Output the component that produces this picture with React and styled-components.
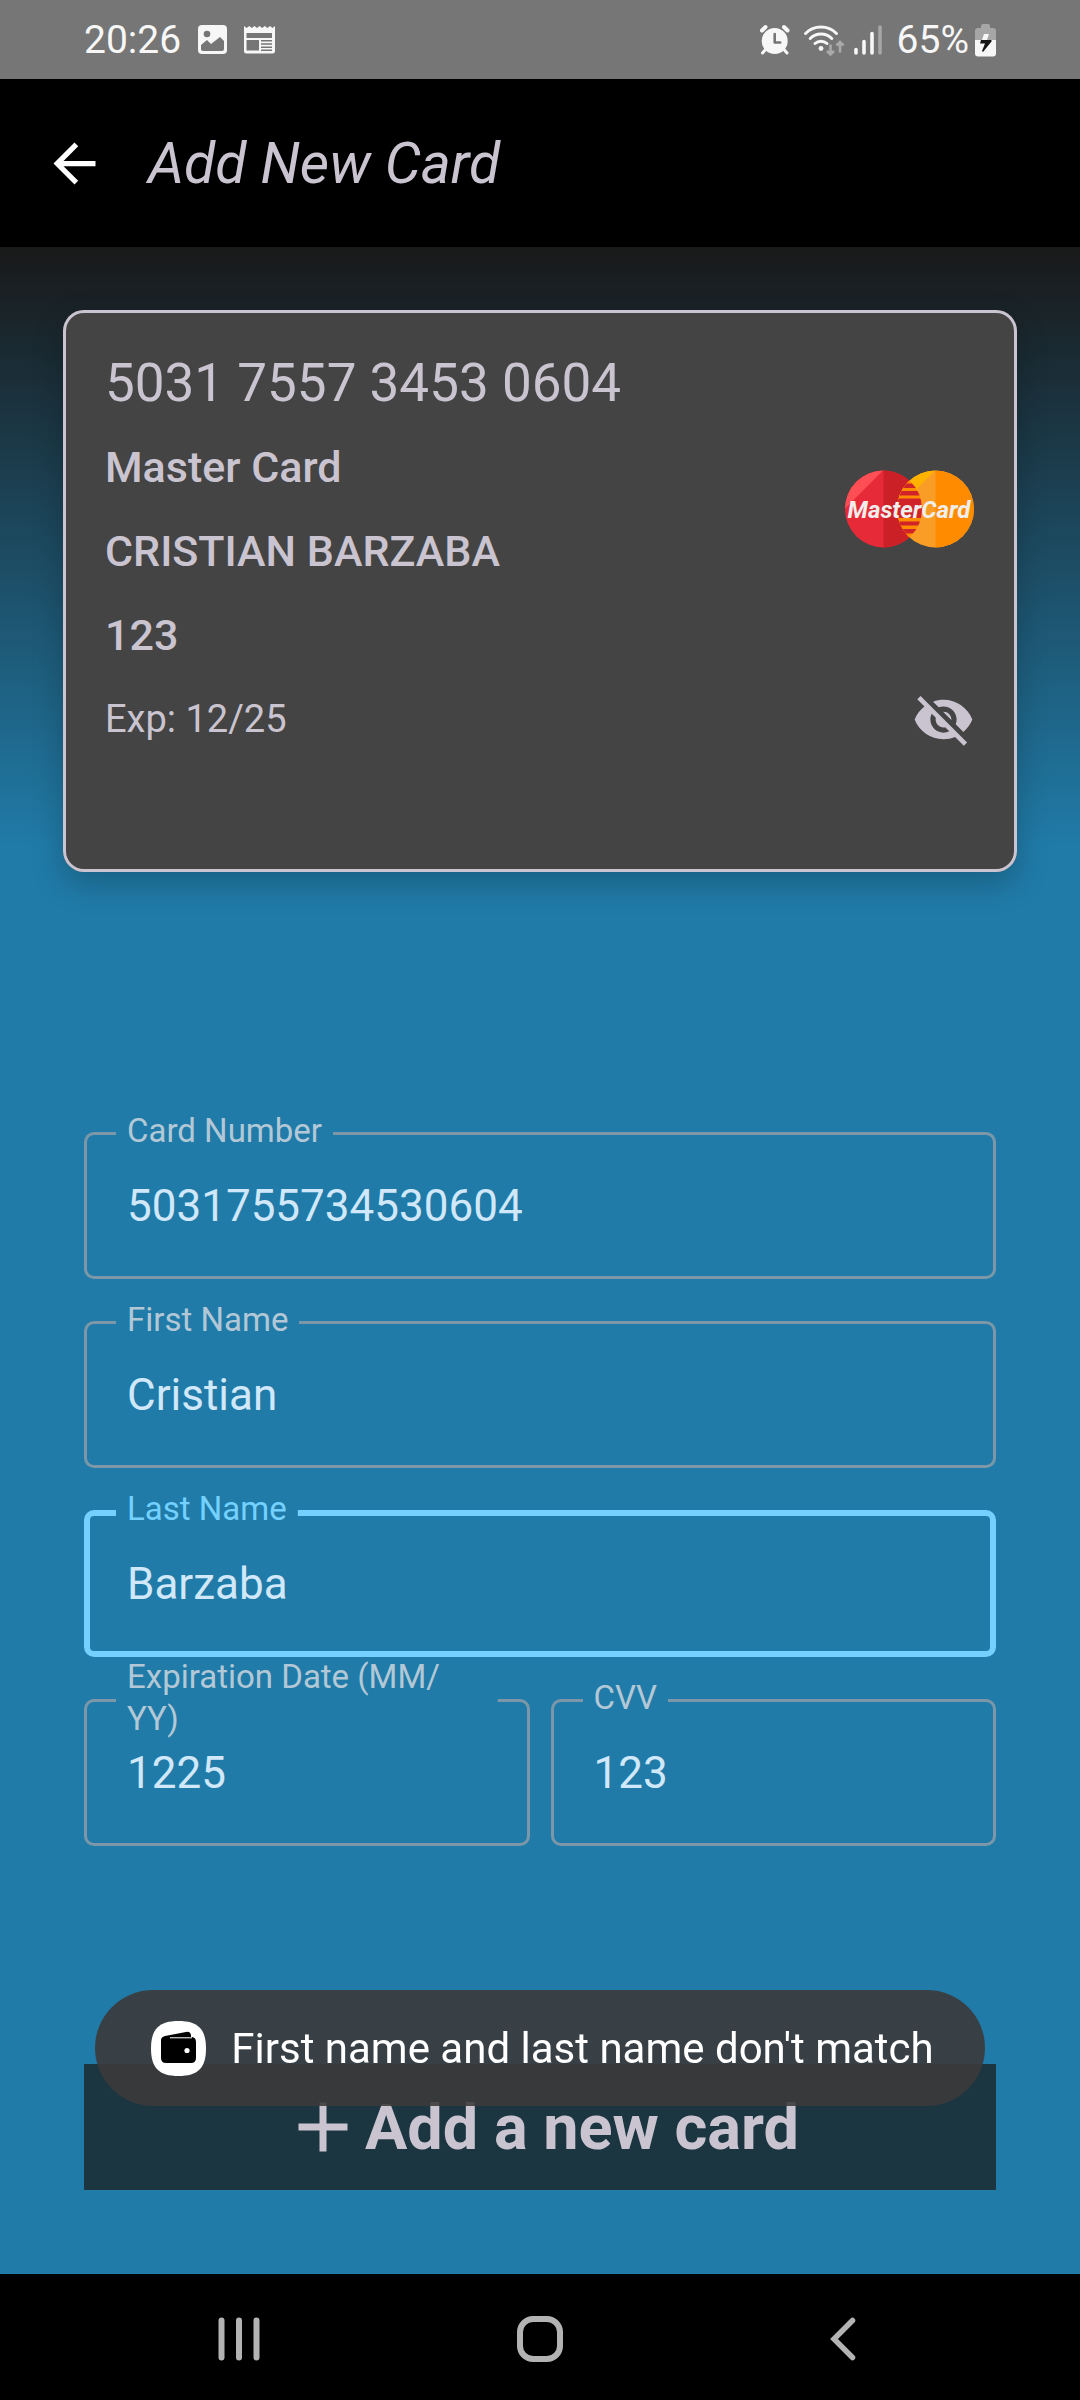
import React from "react";
import styled, { createGlobalStyle, css } from "styled-components";

const color = {
  water: "#207ba8",
  ink: "#191919",
  lilac: "#cac4d0",
  card: "#444444",
  outline: "#7c98a8",
  label: "#b3c8d6",
  value: "#d0e8f9",
  focus: "#74d1ff",
};

const GlobalStyle = createGlobalStyle`
  *, *::before, *::after { box-sizing: border-box; }
  body {
    margin: 0;
    background: ${color.water};
    font-family: Roboto, "Noto Sans", sans-serif;
  }
  button, input { font: inherit; }
`;

const Screen = styled.div`
  display: flex;
  flex-direction: column;
  min-height: 100vh;
`;

const StatusBar = styled.header`
  display: flex;
  align-items: center;
  justify-content: space-between;
  height: 79px;
  padding: 0 84px;
  background: #767676;
  color: #f7f7f7;
  font-size: 39px;
`;

const StatusGroup = styled.div`
  display: flex;
  align-items: center;
  gap: ${(p) => p.$gap}px;

  svg { display: block; }
`;

const AppBar = styled.div`
  display: flex;
  align-items: center;
  gap: 42px;
  height: 168px;
  padding: 0 43px;
  background: #000;
`;

const IconButton = styled.button`
  display: grid;
  place-items: center;
  padding: 0;
  border: 0;
  background: none;
  color: ${(p) => p.$tint};
  cursor: pointer;

  svg { display: block; }
`;

const Title = styled.h1`
  margin: 0;
  color: ${color.lilac};
  font-size: 57px;
  font-style: italic;
  font-weight: 400;
`;

const Content = styled.main`
  display: flex;
  flex: 1;
  flex-direction: column;
  padding: 63px 63px 84px;
  background: linear-gradient(${color.ink}, ${color.water} 600px);
`;

const BankCard = styled.section`
  display: grid;
  grid-template-columns: 1fr auto;
  grid-template-rows: repeat(5, 84px);
  align-items: center;
  padding: 31px 42px 111px;
  border-radius: 21px;
  background: ${color.card};
  box-shadow: inset 0 0 0 3px ${color.lilac}, 0 12px 32px rgba(0, 0, 0, 0.22);
  color: ${color.lilac};
`;

const cardText = {
  number: css`font-size: 53px;`,
  strong: css`font-size: 43px; font-weight: 500;`,
  small: css`font-size: 38px;`,
};

const CardLine = styled.p`
  grid-column: 1;
  margin: 0;
  ${(p) => cardText[p.$kind]}
`;

const Brand = styled.div`
  grid-column: 2;
  grid-row: 2 / span 2;
  justify-self: end;

  svg { display: block; }
`;

const Reveal = styled(IconButton)`
  grid-column: 2;
  grid-row: 5;
  justify-self: end;
`;

const Form = styled.form`
  display: flex;
  flex: 1;
  flex-direction: column;
  justify-content: space-between;
  padding: 260px 21px 0;
`;

const Fields = styled.div`
  display: grid;
  grid-template-columns: 1fr 1fr;
  gap: 42px 21px;
`;

const Field = styled.div`
  position: relative;
  grid-column: ${(p) => (p.$half ? "auto" : "1 / -1")};
`;

const FieldLabel = styled.label`
  position: absolute;
  top: -1px;
  left: 32px;
  max-width: calc(100% - 64px);
  padding: 0 11px;
  transform: translateY(-50%);
  background: linear-gradient(${color.water}, ${color.water}) center / 100% 16px no-repeat;
  color: ${(p) => (p.$active ? color.focus : color.label)};
  font-size: 33px;
  line-height: 42px;
`;

const FieldInput = styled.input`
  display: block;
  width: 100%;
  height: 147px;
  padding: 0 43px;
  border: 0;
  border-radius: 10px;
  outline: 0;
  background: transparent;
  box-shadow: inset 0 0 0 ${(p) => (p.$active ? `6px ${color.focus}` : `3px ${color.outline}`)};
  color: ${color.value};
  font-size: 44px;
`;

const SubmitButton = styled.button`
  display: flex;
  align-items: center;
  justify-content: center;
  height: 126px;
  padding: 0;
  border: 0;
  background: #1b3641;
  color: ${color.lilac};
  font-size: 63px;
  font-weight: 700;
  cursor: pointer;
`;

const ToastLayer = styled.div`
  position: fixed;
  right: 0;
  bottom: 294px;
  left: 0;
  display: flex;
  justify-content: center;
  pointer-events: none;
`;

const Toast = styled.div`
  display: flex;
  align-items: center;
  gap: 25px;
  height: 116px;
  padding: 0 51px 0 56px;
  border-radius: 58px;
  background: rgba(59, 57, 57, 0.89);
  color: #fff;
  font-size: 42px;
`;

const NavBar = styled.nav`
  display: grid;
  grid-template-columns: repeat(3, 1fr);
  height: 126px;
  padding: 4px 87px 0 88px;
  background: #000;
`;

function PictureIcon() {
  return (
    <svg width="29" height="29" viewBox="0 0 29 29" aria-hidden="true">
      <rect width="29" height="29" rx="4" fill="#f7f7f7" />
      <circle cx="9" cy="9" r="3.3" fill="#767676" />
      <path d="M3 20l6-5 4 4 9-7 4 4v8q0 2-2 2H5q-2 0-2-2z" fill="#767676" />
    </svg>
  );
}

function NewsIcon() {
  return (
    <svg width="31" height="29" viewBox="0 0 31 29" aria-hidden="true">
      <path
        d="M0 1l2.6 2L5.2 1l2.6 2 2.6-2L13 3l2.6-2 2.6 2 2.6-2 2.6 2L26 1l2.6 2L31 1v25q0 2.500-2.500 2.500h-26Q0 28.500 0 26z"
        fill="#f7f7f7"
      />
      <path
        d="M2.500 8h25.500v5H2.500zM2.500 15h12.500v10.500H2.500zM17 15h11v1.500H17zM17 18.200h11v1.500H17zM17 21.400h11v1.500H17zM17 24.500h11v1.500H17z"
        fill="#767676"
      />
    </svg>
  );
}

function AlarmIcon() {
  return (
    <svg width="38" height="32" viewBox="0 0 38 32" aria-hidden="true">
      <g stroke="#f7f7f7" strokeLinecap="round">
        <path d="M3 6.500L6.500 3M28.500 6.500L25 3" strokeWidth="4" />
        <path d="M7 25l-3.500 4M24.500 25l3.500 4" strokeWidth="3" />
      </g>
      <circle cx="15.700" cy="17" r="13" fill="#f7f7f7" />
      <path d="M15.700 10v8.500h5.500" fill="none" stroke="#767676" strokeWidth="2.600" strokeLinecap="round" strokeLinejoin="round" />
    </svg>
  );
}

function WifiIcon() {
  return (
    <svg width="45" height="34" viewBox="0 0 45 34" fill="none" aria-hidden="true">
      <g stroke="#f7f7f7" strokeWidth="3" strokeLinecap="round">
        <path d="M2.500 10.500a22 22 0 0 1 31 0" />
        <path d="M7.200 15.500a15.500 15.500 0 0 1 21.600 0" />
        <path d="M12 20.500a9 9 0 0 1 12 0" />
      </g>
      <circle cx="18" cy="25.500" r="2.400" fill="#f7f7f7" />
      <path
        d="M27.500 21.500v9.500M24 28l3.500 3.500L31 28M37 29.500V19.500M33.500 22.500L37 19l3.500 3.500"
        stroke="#aaa"
        strokeWidth="2.600"
      />
    </svg>
  );
}

function SignalIcon() {
  return (
    <svg width="37" height="32" viewBox="0 0 37 32" strokeLinecap="round" strokeWidth="3.600" aria-hidden="true">
      <path d="M2 25.500v3.500M10 17.500V29M18 9.500V29" stroke="#f7f7f7" />
      <path d="M26 3v26" stroke="#a6a6a6" />
    </svg>
  );
}

function BatteryIcon() {
  return (
    <svg width="21" height="34" viewBox="0 0 21 34" aria-hidden="true">
      <path d="M6 5V3q0-2 2-2h5q2 0 2 2v2h3q3 0 3 3v9H0V8q0-3 3-3z" fill="#a6a6a6" />
      <path d="M0 17h21v13.500q0 3-3 3H3q-3 0-3-3z" fill="#f7f7f7" />
      <path d="M9 11h5l-2 6H7z" fill="#f7f7f7" />
      <path d="M6 17h10.500v1.500L8 29l-1-1 3-7.500H5z" fill="#141414" />
    </svg>
  );
}

function MaterialIcon({ size, path }) {
  return (
    <svg width={size} height={size} viewBox="0 0 24 24" fill="currentColor" aria-hidden="true">
      <path d={path} />
    </svg>
  );
}

const ARROW_BACK = "M20 11H7.830l5.590-5.590L12 4l-8 8 8 8 1.410-1.410L7.830 13H20v-2z";
const ADD = "M19 13h-6v6h-2v-6H5v-2h6V5h2v6h6v2z";
const VISIBILITY_OFF =
  "M12 7c2.760 0 5 2.240 5 5 0 .65-.13 1.260-.36 1.830l2.920 2.920c1.510-1.260 2.700-2.890 3.430-4.750-1.730-4.390-6-7.500-11-7.500-1.400 0-2.740.25-3.980.7l2.160 2.160C10.740 7.130 11.350 7 12 7zM2 4.270l2.280 2.280.46.46C3.080 8.300 1.780 10.020 1 12c1.730 4.390 6 7.500 11 7.500 1.550 0 3.030-.3 4.380-.84l.42.42L19.730 22 21 20.730 3.270 3 2 4.270zM7.530 9.800l1.550 1.550c-.05.21-.08.43-.08.65 0 1.660 1.340 3 3 3 .22 0 .44-.03.65-.08l1.550 1.550c-.67.33-1.410.53-2.200.53-2.760 0-5-2.240-5-5 0-.79.2-1.530.53-2.200zm4.310-.78l3.150 3.150.02-.16c0-1.660-1.340-3-3-3l-.17.01z";

const STRIPES = [
  [13.5, 4.5],
  [21, 4.5],
  [28.500, 19.500],
  [51.500, 4],
  [59, 4.500],
];

function MasterCardLogo() {
  return (
    <svg width="130" height="78" viewBox="0 0 130 78" role="img" aria-label="MasterCard">
      <defs>
        <clipPath id="mc-left"><circle cx="38.500" cy="39" r="38.500" /></clipPath>
        <clipPath id="mc-right"><circle cx="90.500" cy="39" r="38.500" /></clipPath>
      </defs>
      <g clipPath="url(#mc-left)">
        <path d="M0 0h78v78H0z" fill="#e62a37" />
        <path d="M0 0h38.500L0 38.500z" fill="#ff4f55" />
        <path d="M38.500 0H78v78H38.500z" fill="#cc2027" />
      </g>
      <g clipPath="url(#mc-right)">
        <path d="M52 0h78v78H52z" fill="#f99d26" />
        <path d="M52 0h38.500L52 38.500z" fill="#ffb300" />
        <path d="M90.500 0H130v78H90.500z" fill="#ff8c00" />
        <g clipPath="url(#mc-left)">
          <path d="M52 0h26v78H52z" fill="#ff8c00" />
          {STRIPES.map(([y, h]) => (
            <rect key={y} x="50" y={y} width="30" height={h} fill="#d1232a" />
          ))}
        </g>
      </g>
      <text
        x="64"
        y="48"
        textAnchor="middle"
        fill="#f0eeec"
        fontFamily='Roboto, "Noto Sans", sans-serif'
        fontSize="24"
        fontStyle="italic"
        fontWeight="700"
      >
        MasterCard
      </text>
    </svg>
  );
}

function WalletIcon() {
  return (
    <svg width="55" height="55" viewBox="0 0 55 55" aria-hidden="true">
      <path
        d="M27.500 0C47 0 55 8 55 27.500S47 55 27.500 55 0 47 0 27.500 8 0 27.500 0z"
        fill="#fff"
      />
      <path d="M10 19q0-3 4-4l21-4q4-1 5 3v2q5 0 5 5v16q0 5-5 5H15q-5 0-5-5z" fill="#000" />
      <path d="M19 16.800h22" stroke="#fff" strokeWidth="1" />
      <circle cx="36" cy="29.500" r="2.600" fill="#fff" />
    </svg>
  );
}

function RecentsIcon() {
  return (
    <svg width="44" height="44" viewBox="0 0 44 44" aria-hidden="true">
      <path d="M4.500 3.500v37M22 3.500v37M39.500 3.500v37" stroke="#b3b3b3" strokeWidth="6" strokeLinecap="round" />
    </svg>
  );
}

function HomeIcon() {
  return (
    <svg width="46" height="46" viewBox="0 0 46 46" aria-hidden="true">
      <rect x="3" y="3" width="40" height="40" rx="13" fill="none" stroke="#b3b3b3" strokeWidth="6" />
    </svg>
  );
}

function BackIcon() {
  return (
    <svg width="44" height="44" viewBox="0 0 44 44" aria-hidden="true">
      <path
        d="M32.500 3.500L14 22l18.500 18.500"
        fill="none"
        stroke="#b3b3b3"
        strokeWidth="5.500"
        strokeLinecap="round"
      />
    </svg>
  );
}

const FIELDS = [
  { id: "card-number", label: "Card Number", value: "5031755734530604" },
  { id: "first-name", label: "First Name", value: "Cristian" },
  { id: "last-name", label: "Last Name", value: "Barzaba", active: true },
  { id: "expiration", label: "Expiration Date (MM/\u200bYY)", value: "1225", half: true },
  { id: "cvv", label: "CVV", value: "123", half: true },
];

function TextField({ id, label, value, active, half }) {
  return (
    <Field $half={half}>
      <FieldInput id={id} type="text" defaultValue={value} $active={active} />
      <FieldLabel htmlFor={id} $active={active}>{label}</FieldLabel>
    </Field>
  );
}

export default function App() {
  return (
    <>
      <GlobalStyle />
      <Screen>
        <StatusBar>
          <StatusGroup $gap={17}>
            <span>20:26</span>
            <PictureIcon />
            <NewsIcon />
          </StatusGroup>
          <StatusGroup $gap={6}>
            <AlarmIcon />
            <WifiIcon />
            <SignalIcon />
            <span>65%</span>
            <BatteryIcon />
          </StatusGroup>
        </StatusBar>

        <AppBar>
          <IconButton type="button" aria-label="Back" $tint="#fff">
            <MaterialIcon size={63} path={ARROW_BACK} />
          </IconButton>
          <Title>Add New Card</Title>
        </AppBar>

        <Content>
          <BankCard>
            <CardLine $kind="number">5031 7557 3453 0604</CardLine>
            <CardLine $kind="strong">Master Card</CardLine>
            <CardLine $kind="strong">CRISTIAN BARZABA</CardLine>
            <CardLine $kind="strong">123</CardLine>
            <CardLine $kind="small">Exp: 12/25</CardLine>
            <Brand>
              <MasterCardLogo />
            </Brand>
            <Reveal type="button" aria-label="Hide card details" $tint={color.lilac}>
              <MaterialIcon size={63} path={VISIBILITY_OFF} />
            </Reveal>
          </BankCard>

          <Form onSubmit={(event) => event.preventDefault()}>
            <Fields>
              {FIELDS.map((field) => (
                <TextField key={field.id} {...field} />
              ))}
            </Fields>
            <SubmitButton type="submit">
              <MaterialIcon size={84} path={ADD} />
              Add a new card
            </SubmitButton>
          </Form>
        </Content>

        <NavBar>
          <IconButton type="button" aria-label="Recent apps"><RecentsIcon /></IconButton>
          <IconButton type="button" aria-label="Home"><HomeIcon /></IconButton>
          <IconButton type="button" aria-label="Go back"><BackIcon /></IconButton>
        </NavBar>
      </Screen>

      <ToastLayer>
        <Toast role="status">
          <WalletIcon />
          <span>First name and last name don't match</span>
        </Toast>
      </ToastLayer>
    </>
  );
}
